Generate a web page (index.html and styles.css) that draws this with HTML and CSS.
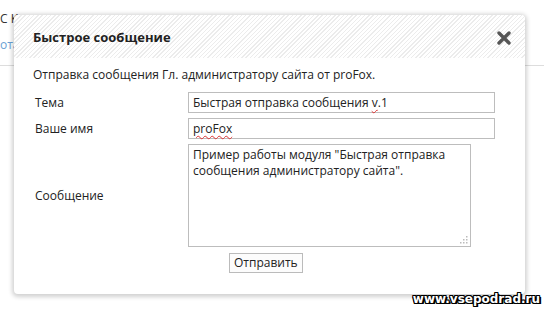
FILE: index.html
```html
<!DOCTYPE html>
<html lang="ru">
<head>
<meta charset="utf-8">
<link rel="stylesheet" href="styles.css">
</head>
<body>
<div class="page">
  <div class="bg-text">
    <div class="bg-line1">С К</div>
    <div class="bg-line2">ота</div>
    <div class="bg-rule"></div>
  </div>
  <div class="dialog">
    <div class="dialog-head">
      <span class="dialog-title">Быстрое сообщение</span>
      <svg class="close" width="14" height="14" viewBox="0 0 14 14"><path d="M2 2 L12 12 M12 2 L2 12" stroke="#555" stroke-width="3.4" stroke-linecap="round"/></svg>
    </div>
    <div class="dialog-body">
      <p class="intro">Отправка сообщения Гл. администратору сайта от proFox.</p>
      <div class="form">
        <label class="lbl">Тема</label>
        <div class="field">Быстрая отправка сообщения <span class="spell">v</span>.1</div>
        <label class="lbl">Ваше имя</label>
        <div class="field"><span class="spell">proFox</span></div>
        <label class="lbl lbl-msg">Сообщение</label>
        <div class="area">Пример работы модуля "Быстрая отправка сообщения администратору сайта".
          <svg class="grip" width="8" height="8" viewBox="0 0 8 8"><g fill="#bbb"><rect x="6" y="0" width="1.5" height="1.5"/><rect x="3" y="3" width="1.5" height="1.5"/><rect x="6" y="3" width="1.5" height="1.5"/><rect x="0" y="6" width="1.5" height="1.5"/><rect x="3" y="6" width="1.5" height="1.5"/><rect x="6" y="6" width="1.5" height="1.5"/></g></svg>
        </div>
        <div class="btn-row"><button class="btn">Отправить</button></div>
      </div>
    </div>
  </div>
  <div class="watermark">www.vsepodrad.ru</div>
</div>
</body>
</html>
```
FILE: styles.css
```css
* { box-sizing: border-box; }
html, body { margin: 0; padding: 0; background: #fff; }
body { width: 544px; height: 309px; overflow: hidden; font-family: "Open Sans", "Noto Sans", sans-serif; color: #222; }
.page { position: relative; width: 544px; height: 309px; }
.bg-text { position: absolute; left: 0; top: 0; width: 544px; height: 80px; font-size: 12px; }
.bg-line1 { position: absolute; left: 0; top: 10px; color: #333; }
.bg-line2 { position: absolute; left: 0; top: 36px; color: #6a9fd4; }
.bg-rule { position: absolute; left: 0; right: 0; top: 65px; border-top: 1px solid #ddd; }
.dialog {
  position: absolute; left: 14px; top: 15px; width: 511px; height: 279px;
  background: #fff; border-radius: 4px;
  box-shadow: 0 1px 4px 2px rgba(0,0,0,0.18);
}
.dialog-head {
  height: 43px; display: flex; align-items: center; justify-content: space-between;
  padding: 0 14px 0 19px; border-radius: 4px 4px 0 0;
  background: repeating-linear-gradient(-45deg, #fff 0, #fff 2px, #ececec 2px, #ececec 3px);
}
.dialog-title { font-weight: bold; font-size: 13px; color: #222; }
.close { display: block; margin-top: 2px; }
.dialog-body { padding: 8px 0 0 19px; font-size: 12px; }
.intro { margin: 0 0 9px 0; }
.form { display: grid; grid-template-columns: 155px 307px; row-gap: 5px; padding-left: 0; }
.lbl { align-self: center; padding-left: 2px; }
.field { height: 21px; border: 1px solid #bdbdbd; padding: 1px 4px; line-height: 17px; white-space: nowrap; }
.area { position: relative; height: 103px; width: 283px; border: 1px solid #bdbdbd; padding: 2px 4px; line-height: 16px; }
.grip { position: absolute; right: 2px; bottom: 2px; }
.spell { text-decoration: underline wavy #d33; text-decoration-thickness: 1px; text-underline-offset: 2px; }
.btn-row { grid-column: 1 / 3; padding-left: 196px; margin-top: 1px; }
.btn {
  font-family: inherit; font-size: 12px; color: #222; background: #fcfcfc;
  border: 1px solid #bbb; height: 20px; padding: 0 4px; line-height: 16px; border-radius: 0;
}
.watermark {
  position: absolute; right: 4px; bottom: 3px; font-family: "DejaVu Sans", sans-serif; font-weight: bold; font-size: 12px;
  color: #fff; letter-spacing: 0px;
  text-shadow: -1px -1px 0 #000, 1px -1px 0 #000, -1px 1px 0 #000, 1px 1px 0 #000, 0 1px 0 #000, 0 -1px 0 #000, 1px 0 0 #000, -1px 0 0 #000, 2px 1px 0 #000;
}
```
